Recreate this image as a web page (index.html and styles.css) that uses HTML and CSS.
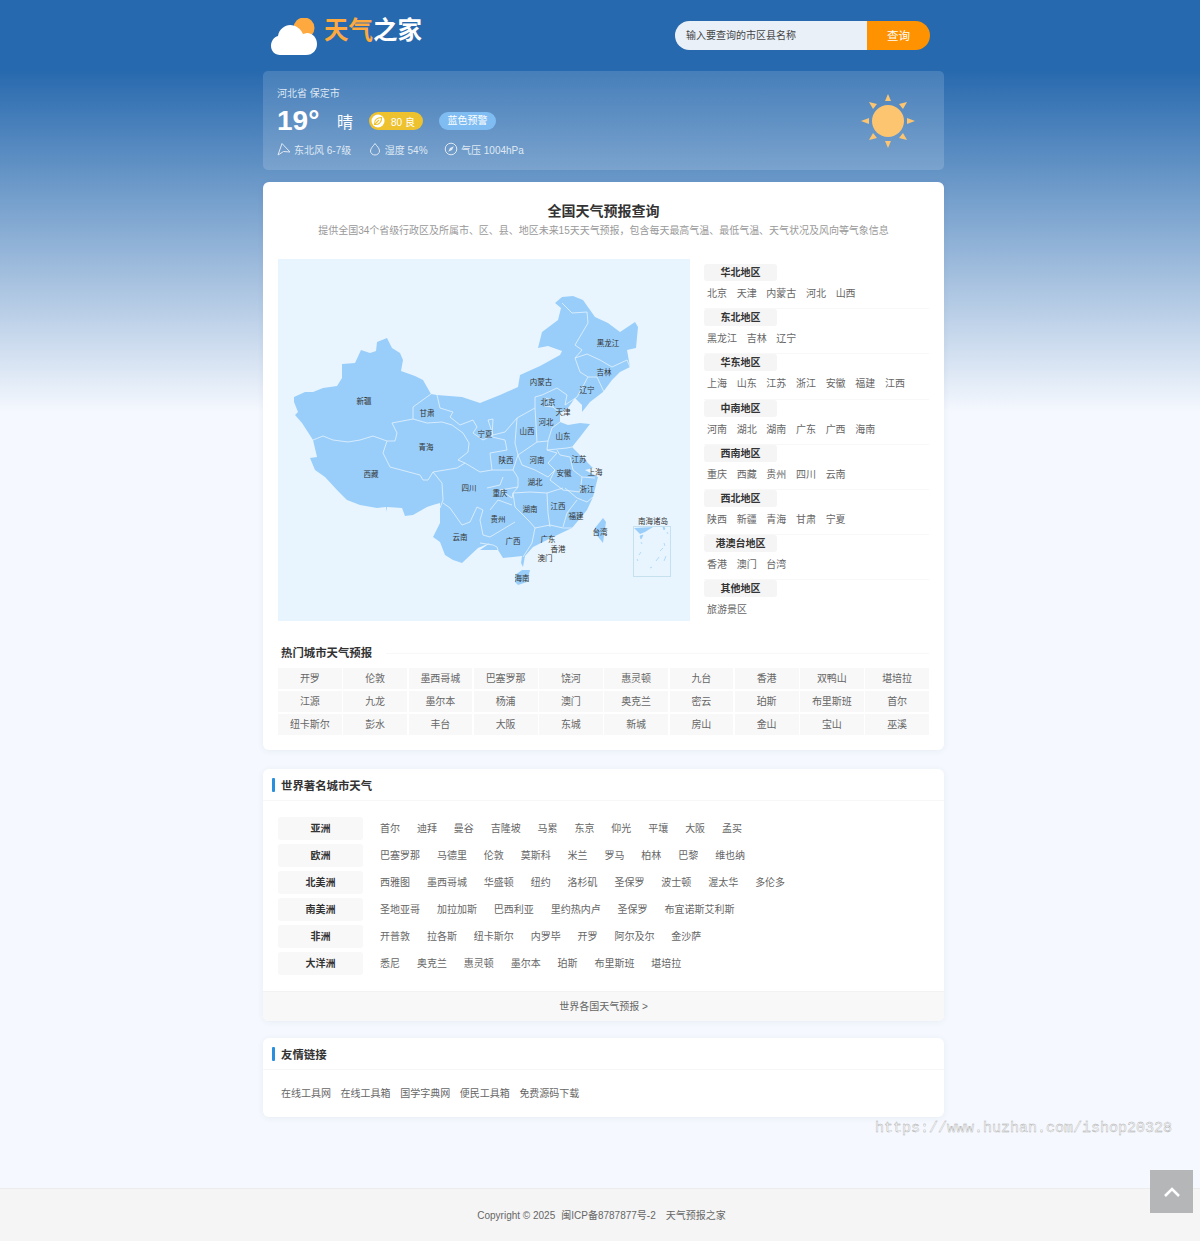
FILE: index.html
```html
<!DOCTYPE html>
<html lang="zh-CN">
<head>
<meta charset="utf-8">
<title>天气之家</title>
<link rel="stylesheet" href="styles.css">
</head>
<body>
<div class="wrap">
  <header class="top">
    <div class="logo">
      <svg class="logo-mark" viewBox="0 0 48 38" width="48" height="38">
        <circle cx="34" cy="10" r="10.500" fill="#fda93f"/>
        <path d="M10 37C5 37 1 33 1 28s3-9 7-10C9 11 15 7 20 7c6 0 11 4 13 9 1 0 3-1 4-1 6 0 10 5 10 11s-4 11-11 11Z" fill="#fff"/>
      </svg>
      <div class="logo-text"><span class="logo-o">天气</span>之家</div>
    </div>
    <div class="search">
      <div class="search-input">输入要查询的市区县名称</div>
      <div class="search-btn">查询</div>
    </div>
  </header>

  <section class="now">
    <div class="now-main">
      <div class="now-city">河北省 保定市</div>
      <div class="now-line">
        <span class="now-temp">19°</span>
        <span class="now-wea">晴</span>
        <span class="badge-aqi">
          <svg class="leaf" viewBox="0 0 14 14" width="14" height="14"><circle cx="7" cy="7" r="6.500" fill="#fff"/><path d="M3.500 10.500C3 6 6 3.500 10.500 3.500 11 8 8 11 3.500 10.500ZM4 10l4-4" fill="none" stroke="#eec22f" stroke-width="1.100"/></svg>
          <span>80 良</span>
        </span>
        <span class="badge-warn">蓝色预警</span>
      </div>
      <div class="now-stats">
        <span class="stat">
          <svg viewBox="0 0 14 14" width="14" height="14"><path d="M1 13 5 1.500 13 10 6.500 9.500Z" fill="none" stroke="#dfe9f4" stroke-width="1"/></svg>
          东北风 6-7级
        </span>
        <span class="stat">
          <svg viewBox="0 0 14 14" width="14" height="14"><path d="M7 1.500C5.500 4 2.500 6 2.500 9a4.500 4 0 0 0 9 0C11.500 6 8.500 4 7 1.500Z" fill="none" stroke="#dfe9f4" stroke-width="1"/></svg>
          湿度 54%
        </span>
        <span class="stat">
          <svg viewBox="0 0 14 14" width="14" height="14"><circle cx="7" cy="7" r="5.800" fill="none" stroke="#dfe9f4" stroke-width="1"/><path d="M9.800 4.200 8 8 4.200 9.800 6 6Z" fill="#dfe9f4"/></svg>
          气压 1004hPa
        </span>
      </div>
    </div>
    <svg class="sun" viewBox="0 0 54 54" width="54" height="54">
      <circle cx="27" cy="27" r="16" fill="#fdc56f"/>
      <g fill="#fdc56f">
        <path d="M27 0l3 7h-6Z"/><path d="M27 54l3-7h-6Z"/><path d="M0 27l8-3v6Z"/><path d="M54 27l-8-3v6Z"/>
        <path d="M8 8l8 2-4 5Z"/><path d="M46 8l-8 2 4 5Z"/><path d="M8 46l8-2-4-5Z"/><path d="M46 46l-8-2 4-5Z"/>
      </g>
    </svg>
  </section>

  <main class="card card-query">
    <h1 class="q-title">全国天气预报查询</h1>
    <p class="q-sub">提供全国34个省级行政区及所属市、区、县、地区未来15天天气预报，包含每天最高气温、最低气温、天气状况及风向等气象信息</p>
    <div class="q-body">
      <div class="map">
        <svg viewBox="278 259 412 362" width="412" height="362">
          <path class="land" d="M294 397 305 392 313 392 323 388 337 386 342 378 342 364 355 363 361 350 370 353 376 351 377 342 387 338 392 348 400 353 403 360 401 371 415 376 423 380 431 394 437 395 462 397 480 403 500 395 518 387 520 375 540 366 560 355 562 351 548 346 538 348 542 332 558 320 561 308 555 303 562 297 573 296 583 300 595 317 608 323 620 332 635 322 638 327 636 348 627 350 630 367 620 372 612 380 603 392 590 402 582 412 582 405 575 398 568 408 560 413 560 422 568 425 580 423 590 424 580 437 572 447 580 455 593 468 585 470 598 477 593 497 587 510 572 528 553 537 533 547 525 556 523 567 521 563 522 556 513 557 503 558 498 550 480 550 490 543 478 548 462 563 453 560 445 555 440 542 433 537 440 523 440 503 433 505 427 507 413 515 405 516 402 508 387 507 387 512 386 507 377 508 360 505 347 500 337 490 325 477 315 470 310 458 317 457 313 440 302 423 295 415 298 412 294 402Z"/>
          <path class="land" d="M515 575 522 570 530 570 527 582 518 585 515 582Z"/>
          <path class="land" d="M595 528 603 518 606 522 603 543 595 533Z"/>
          <g class="line">
            <path d="M313 440 323 436 333 440 348 442 360 440 373 436 387 441 395 441 397 433 392 423 413 419 413 407 431 394"/>
            <path d="M413 419 427 423 442 422 452 425 463 433 469 443 468 452 458 460 465 463 457 468 433 472 428 480 423 480 420 475 390 467 383 453 387 441"/>
            <path d="M433 472 442 483 443 500 440 508"/>
            <path d="M443 503 450 508 462 525 470 522 477 507 483 510 480 520 483 535 490 537 505 528 515 522"/>
            <path d="M437 395 440 408 453 412 450 417 460 425 473 420 477 427 473 433 483 440 493 435 488 420 493 419 492 437 505 440 507 450 490 453 492 470 480 472 465 463"/>
            <path d="M493 435 505 432 517 418 535 408 535 397 542 395 557 388 567 395 565 405 577 397 588 377 580 372 575 358 582 350 575 345 588 323 587 312 572 313 562 303"/>
            <path d="M575 358 587 354 600 360 612 367 627 360 630 367"/>
            <path d="M588 377 597 377 604 392"/>
            <path d="M545 398 552 400 553 407 545 406Z"/>
            <path d="M553 407 560 413"/>
            <path d="M517 418 515 443 518 455 537 442 535 408"/>
            <path d="M537 442 548 441 552 428 560 422"/>
            <path d="M548 441 547 450 567 448 572 447"/>
            <path d="M518 455 522 465 535 470 548 477 555 470 548 463 557 453 547 450"/>
            <path d="M557 450 560 455 570 457 573 470 582 477 595 478"/>
            <path d="M555 470 550 480 563 490 580 492 582 477"/>
            <path d="M492 470 513 470 518 455"/>
            <path d="M513 470 515 473 518 478 518 487 513 493 530 492 547 493 563 488"/>
            <path d="M503 477 500 485 487 488"/>
            <path d="M518 487 500 490 512 498 513 493"/>
            <path d="M513 493 515 507 530 522 535 528 532 543 523 557"/>
            <path d="M490 510 498 500 512 505"/>
            <path d="M480 543 493 545 497 547 498 550"/>
            <path d="M547 493 548 513 550 527"/>
            <path d="M535 528 550 525 563 528 573 528"/>
            <path d="M563 527 567 513 577 500"/>
            <path d="M565 488 577 498 587 502 593 497"/>
          </g>
          <rect class="inset" x="633.500" y="526.500" width="37" height="50"/>
          <path class="land" d="M634 528 653 527 645 532 640 534Z"/>
          <g class="isles">
            <path d="M640 536 643 535 641 539Z"/><path d="M663 527 665 528 664 530Z"/><path d="M664 543 665 546M641 542 642 544M660 551 663 548M641 552 639 555M656 561 659 557M652 567 650 568M637 559 638 561M667 532 668 534M666 556 664 561"/>
          </g>
          <g class="lab">
            <text x="364" y="404">新疆</text><text x="427" y="416">甘肃</text><text x="426" y="450">青海</text><text x="371" y="477">西藏</text><text x="469" y="491">四川</text><text x="460" y="540">云南</text>
            <text x="485" y="437">宁夏</text><text x="506" y="463">陕西</text><text x="527" y="434">山西</text><text x="537" y="463">河南</text><text x="546" y="425">河北</text><text x="541" y="385">内蒙古</text>
            <text x="608" y="346">黑龙江</text><text x="604" y="375">吉林</text><text x="587" y="393">辽宁</text><text x="548" y="405">北京</text><text x="563" y="415">天津</text><text x="563" y="439">山东</text>
            <text x="579" y="462">江苏</text><text x="595" y="475">上海</text><text x="564" y="476">安徽</text><text x="535" y="485">湖北</text><text x="587" y="492">浙江</text><text x="500" y="496">重庆</text>
            <text x="530" y="512">湖南</text><text x="558" y="509">江西</text><text x="576" y="519">福建</text><text x="498" y="522">贵州</text><text x="513" y="544">广西</text><text x="548" y="542">广东</text>
            <text x="558" y="552">香港</text><text x="545" y="561">澳门</text><text x="600" y="535">台湾</text><text x="522" y="581">海南</text><text x="653" y="524">南海诸岛</text>
          </g>
        </svg>
      </div>
      <div class="regions">
        <div class="region"><div class="r-head">华北地区</div><div class="r-links"><span>北京</span><span>天津</span><span>内蒙古</span><span>河北</span><span>山西</span></div></div>
        <div class="region"><div class="r-head">东北地区</div><div class="r-links"><span>黑龙江</span><span>吉林</span><span>辽宁</span></div></div>
        <div class="region"><div class="r-head">华东地区</div><div class="r-links"><span>上海</span><span>山东</span><span>江苏</span><span>浙江</span><span>安徽</span><span>福建</span><span>江西</span></div></div>
        <div class="region"><div class="r-head">中南地区</div><div class="r-links"><span>河南</span><span>湖北</span><span>湖南</span><span>广东</span><span>广西</span><span>海南</span></div></div>
        <div class="region"><div class="r-head">西南地区</div><div class="r-links"><span>重庆</span><span>西藏</span><span>贵州</span><span>四川</span><span>云南</span></div></div>
        <div class="region"><div class="r-head">西北地区</div><div class="r-links"><span>陕西</span><span>新疆</span><span>青海</span><span>甘肃</span><span>宁夏</span></div></div>
        <div class="region"><div class="r-head">港澳台地区</div><div class="r-links"><span>香港</span><span>澳门</span><span>台湾</span></div></div>
        <div class="region region-last"><div class="r-head">其他地区</div><div class="r-links"><span>旅游景区</span></div></div>
      </div>
    </div>
    <div class="hot-head"><h2>热门城市天气预报</h2><i></i></div>
    <div class="hot-grid">
      <span>开罗</span><span>伦敦</span><span>墨西哥城</span><span>巴塞罗那</span><span>饶河</span><span>惠灵顿</span><span>九台</span><span>香港</span><span>双鸭山</span><span>堪培拉</span>
      <span>江源</span><span>九龙</span><span>墨尔本</span><span>杨浦</span><span>澳门</span><span>奥克兰</span><span>密云</span><span>珀斯</span><span>布里斯班</span><span>首尔</span>
      <span>纽卡斯尔</span><span>彭水</span><span>丰台</span><span>大阪</span><span>东城</span><span>新城</span><span>房山</span><span>金山</span><span>宝山</span><span>巫溪</span>
    </div>
  </main>

  <section class="card card-world">
    <h2 class="c-head">世界著名城市天气</h2>
    <div class="world">
      <div class="w-row"><div class="w-label">亚洲</div><div class="w-links"><span>首尔</span><span>迪拜</span><span>曼谷</span><span>吉隆坡</span><span>马累</span><span>东京</span><span>仰光</span><span>平壤</span><span>大阪</span><span>孟买</span></div></div>
      <div class="w-row"><div class="w-label">欧洲</div><div class="w-links"><span>巴塞罗那</span><span>马德里</span><span>伦敦</span><span>莫斯科</span><span>米兰</span><span>罗马</span><span>柏林</span><span>巴黎</span><span>维也纳</span></div></div>
      <div class="w-row"><div class="w-label">北美洲</div><div class="w-links"><span>西雅图</span><span>墨西哥城</span><span>华盛顿</span><span>纽约</span><span>洛杉矶</span><span>圣保罗</span><span>波士顿</span><span>渥太华</span><span>多伦多</span></div></div>
      <div class="w-row"><div class="w-label">南美洲</div><div class="w-links"><span>圣地亚哥</span><span>加拉加斯</span><span>巴西利亚</span><span>里约热内卢</span><span>圣保罗</span><span>布宜诺斯艾利斯</span></div></div>
      <div class="w-row"><div class="w-label">非洲</div><div class="w-links"><span>开普敦</span><span>拉各斯</span><span>纽卡斯尔</span><span>内罗毕</span><span>开罗</span><span>阿尔及尔</span><span>金沙萨</span></div></div>
      <div class="w-row"><div class="w-label">大洋洲</div><div class="w-links"><span>悉尼</span><span>奥克兰</span><span>惠灵顿</span><span>墨尔本</span><span>珀斯</span><span>布里斯班</span><span>堪培拉</span></div></div>
    </div>
    <div class="w-more">世界各国天气预报 &gt;</div>
  </section>

  <section class="card card-links">
    <h2 class="c-head">友情链接</h2>
    <div class="f-links"><span>在线工具网</span><span>在线工具箱</span><span>国学字典网</span><span>便民工具箱</span><span>免费源码下载</span></div>
  </section>
</div>

<footer class="foot"><span>Copyright © 2025</span><span class="foot-icp">闽ICP备8787877号-2</span><span class="foot-site">天气预报之家</span></footer>
<div class="mark">https://www.huzhan.com/ishop20328</div>
<div class="totop"><svg viewBox="0 0 18 12" width="18" height="12"><path d="M2 10 9 3l7 7" fill="none" stroke="#fff" stroke-width="2.600"/></svg></div>
</body>
</html>
```

FILE: styles.css
```css
* { box-sizing: border-box; }
html, body { margin: 0; padding: 0; }
body {
  position: relative;
  height: 1241px;
  overflow: hidden;
  font-family: "Liberation Sans", "Noto Sans CJK SC", sans-serif;
  font-size: 10px;
  color: #666;
  background: linear-gradient(180deg, #2769ae 0, #2769ae 70px, #f5f8fe 412px, #f5f8fe 100%);
}
h1, h2, p { margin: 0; }
.wrap { width: 681px; margin-left: 263px; }

.top { height: 71px; display: flex; justify-content: space-between; padding: 15px 14px 0 7px; }
.logo { display: flex; align-items: flex-start; }
.logo-mark { display: block; margin-top: 3px; }
.logo-text { margin: 0 0 0 6px; font-size: 24.500px; line-height: 32px; font-weight: 700; color: #fff; white-space: nowrap; }
.logo-o { color: #fda93f; }
.search { display: flex; width: 255px; height: 29px; margin-top: 6px; border-radius: 15px; overflow: hidden; }
.search-input { flex: 1; background: #e9f0f8; color: #444; padding-left: 11px; line-height: 30px; }
.search-btn { width: 63px; background: #ff9200; color: #fff; text-align: center; font-size: 11.500px; line-height: 30px; }

.now {
  height: 99px; margin-bottom: 12px; padding: 16px 14px 0; border-radius: 5px;
  background: linear-gradient(180deg, rgba(255,255,255,.14), rgba(255,255,255,.15));
  display: flex; justify-content: space-between; color: #dfe9f4;
}
.now-city { line-height: 14px; }
.now-line { display: flex; align-items: center; height: 34px; margin-top: 3px; }
.now-temp { width: 60px; font-size: 28px; font-weight: 700; color: #fff; line-height: 34px; }
.now-wea { width: 32px; font-size: 16px; color: #fff; }
.badge-aqi { display: flex; align-items: center; gap: 6px; width: 54px; height: 18px; padding-left: 2px; border-radius: 9px; background: #eec22f; color: #fff; white-space: nowrap; }
.leaf { display: block; flex: none; }
.badge-warn { margin-left: 16px; width: 57px; height: 18px; border-radius: 9px; background: #7ebcf2; color: #fff; text-align: center; line-height: 18px; }
.now-stats { display: flex; gap: 16.500px; margin-top: 3px; }
.stat { display: flex; align-items: center; gap: 3px; height: 16px; }
.stat svg { display: block; }
.sun { margin: 7px 15px 0 0; display: block; }

.card { background: #fff; border-radius: 6px; box-shadow: 0 1px 6px rgba(40,80,130,.07); overflow: hidden; }
.card-query { height: 568px; padding: 21px 15px 0; margin-bottom: 19px; }
.q-title { font-size: 14px; line-height: 17px; font-weight: 700; color: #333; text-align: center; }
.q-sub { font-size: 10px; letter-spacing: -.03px; line-height: 14px; margin-top: 4px; color: #999; text-align: center; white-space: nowrap; }
.q-body { display: flex; margin-top: 21px; }
.map { width: 412px; height: 362px; background: #e9f5fe; flex: none; }
.map svg { display: block; }
.land { fill: #99cefa; }
.line path { fill: none; stroke: #e6f3fd; stroke-width: .8; stroke-linejoin: round; }
.inset { fill: none; stroke: #c5e0ee; stroke-width: 1; }
.isles path { fill: #99cefa; stroke: #99cefa; stroke-width: .7; }
.lab text { font-size: 7.500px; fill: #333; text-anchor: middle; }

.regions { margin-left: 14px; width: 226px; padding-top: 5px; }
.region { height: 45.200px; border-bottom: 1px solid #f8f8f8; }
.region-last { border-bottom: 0; }
.r-head { width: 73px; height: 17px; border-radius: 3px; background: #f5f5f5; color: #333; font-weight: 700; text-align: center; line-height: 17px; }
.r-links { display: flex; gap: 9.670px; padding: 6px 0 0 3px; line-height: 14px; }

.hot-head { display: flex; align-items: center; margin-top: 20px; padding-left: 3px; }
.hot-head h2 { font-size: 11.400px; line-height: 15px; font-weight: 700; color: #333; }
.hot-head i { flex: 1; height: 1px; margin-left: 14px; background: #f8f8f8; }
.hot-grid { display: grid; grid-template-columns: repeat(10, 1fr); gap: 2px 1.500px; margin-top: 7px; }
.hot-grid span { height: 21px; line-height: 21px; background: #f8f8f8; text-align: center; }

.c-head { position: relative; height: 32px; padding-left: 18px; border-bottom: 1px solid #f7f7f7; font-size: 11.400px; line-height: 34px; font-weight: 700; color: #333; }
.c-head::before { content: ""; position: absolute; left: 9px; top: 9px; width: 3px; height: 14px; border-radius: 1px; background: #2a8fdc; }
.card-world { height: 252px; margin-bottom: 17px; }
.world { height: 190px; padding: 14px 15px 0; }
.w-row { display: flex; align-items: center; height: 27px; }
.w-label { width: 85px; height: 23px; border-radius: 3px; background: #f8f8f8; color: #333; font-weight: 700; text-align: center; line-height: 23px; }
.w-links { display: flex; gap: 16.900px; margin: 0 0 2px 17px; }
.w-more { height: 30px; background: #f8f8f8; border-top: 1px solid #f2f2f2; text-align: center; line-height: 29px; }

.card-links { height: 79px; }
.f-links { display: flex; gap: 9.600px; padding: 17px 18px 0; line-height: 14px; }

.foot { position: absolute; left: 0; right: 0; bottom: 0; height: 53px; padding-left: 3px; background: #f5f5f5; border-top: 1px solid #ececec; text-align: center; line-height: 54px; }
.foot-icp { margin-left: 6px; }
.foot-site { margin-left: 10px; }
.mark {
  position: absolute; left: 875px; top: 1119px; font-family: "Liberation Mono", monospace; font-size: 15px; line-height: 20px;
  color: #fff; -webkit-text-stroke: .4px #aaa; white-space: nowrap;
}
.totop { position: absolute; left: 1150px; top: 1170px; width: 43px; height: 43px; background: #b4b6b8; display: flex; align-items: center; justify-content: center; }
.totop svg { display: block; }
```
